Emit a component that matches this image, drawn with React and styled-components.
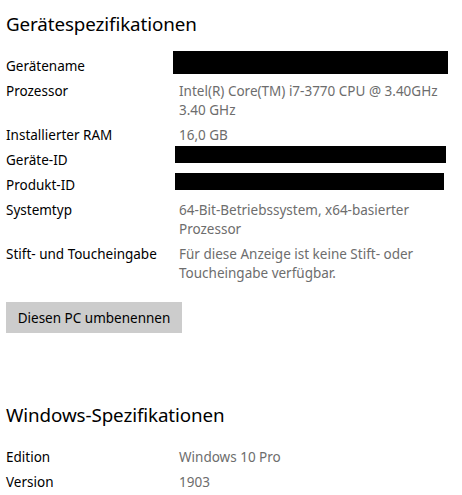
import styled, { createGlobalStyle } from 'styled-components';

const GlobalStyle = createGlobalStyle`
  html, body {
    margin: 0;
    padding: 0;
    background: #ffffff;
  }
  body {
    font-family: "Noto Sans", "Open Sans", sans-serif;
    color: #000000;
  }
`;

const Page = styled.div`
  width: 462px;
  height: 495px;
  overflow: hidden;
  padding: 0 0 0 6px;
  box-sizing: border-box;
`;

const Section = styled.section`
  display: flex;
  flex-direction: column;
  margin-top: ${(p) => p.$top}px;
`;

const Heading = styled.h2`
  margin: 0;
  font-size: 18.8px;
  font-weight: 400;
  line-height: 28px;
  letter-spacing: -0.1px;
`;

const SpecList = styled.dl`
  margin: ${(p) => p.$gap}px 0 0;
  display: grid;
  grid-template-columns: 173px 1fr;
  row-gap: 6px;
  font-size: 13.5px;
  line-height: 19px;
`;

const Label = styled.dt`
  margin: 0;
  color: #000000;
`;

const Value = styled.dd`
  margin: 0;
  position: relative;
  color: #6d6d6d;
  max-width: 262px;
`;

const Redacted = styled.span`
  position: absolute;
  left: ${(p) => p.$left}px;
  top: ${(p) => p.$top}px;
  width: ${(p) => p.$width}px;
  height: ${(p) => p.$height}px;
  background: #000000;
`;

const RenameButton = styled.button`
  margin-top: 19px;
  align-self: flex-start;
  width: 176px;
  height: 31px;
  border: none;
  background: #cccccc;
  color: #000000;
  font-family: inherit;
  font-size: 13.5px;
  padding: 0;
`;

const deviceSpecs = [
  { label: 'Gerätename', redact: { left: -6, top: -6, width: 275, height: 23 } },
  { label: 'Prozessor', value: 'Intel(R) Core(TM) i7-3770 CPU @ 3.40GHz 3.40 GHz' },
  { label: 'Installierter RAM', value: '16,0 GB' },
  { label: 'Geräte-ID', redact: { left: -4, top: -5, width: 271, height: 17 } },
  { label: 'Produkt-ID', redact: { left: -4, top: -3, width: 269, height: 17 } },
  { label: 'Systemtyp', value: '64-Bit-Betriebssystem, x64-basierter Prozessor' },
  { label: 'Stift- und Toucheingabe', value: 'Für diese Anzeige ist keine Stift- oder Toucheingabe verfügbar.' },
];

const windowsSpecs = [
  { label: 'Edition', value: 'Windows 10 Pro' },
  { label: 'Version', value: '1903' },
];

function Specs({ items, gap }) {
  return (
    <SpecList $gap={gap}>
      {items.map((item) => (
        <>
          <Label key={item.label + '-l'}>{item.label}</Label>
          <Value key={item.label + '-v'}>
            {item.value || '\u00a0'}
            {item.redact && (
              <Redacted
                $left={item.redact.left}
                $top={item.redact.top}
                $width={item.redact.width}
                $height={item.redact.height}
              />
            )}
          </Value>
        </>
      ))}
    </SpecList>
  );
}

export default function App() {
  return (
    <Page>
      <GlobalStyle />
      <Section $top={10}>
        <Heading>Gerätespezifikationen</Heading>
        <Specs items={deviceSpecs} gap={19} />
        <RenameButton>Diesen PC umbenennen</RenameButton>
      </Section>
      <Section $top={68}>
        <Heading>Windows-Spezifikationen</Heading>
        <Specs items={windowsSpecs} gap={19} />
      </Section>
    </Page>
  );
}
